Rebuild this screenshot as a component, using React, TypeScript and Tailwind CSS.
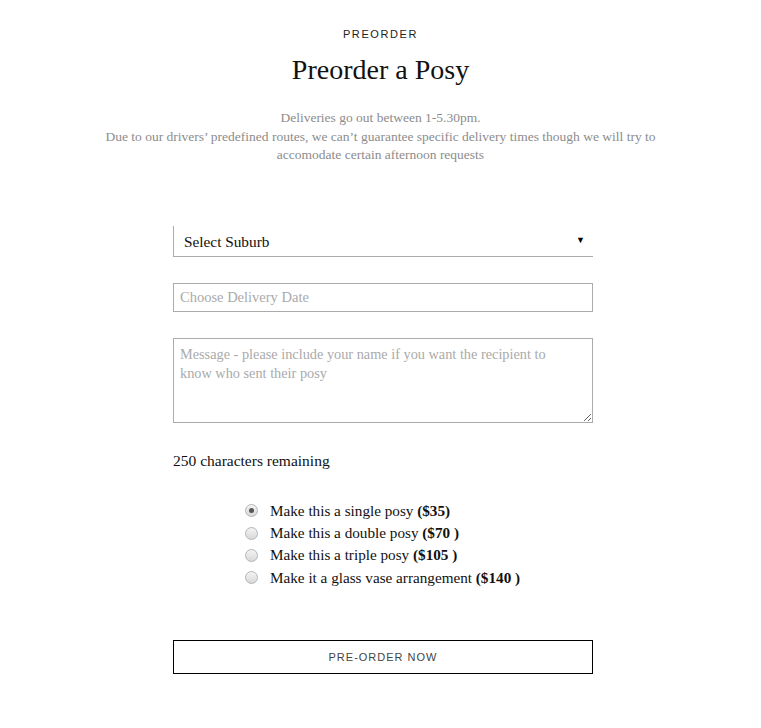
import { useState } from 'react';

const options = [
  { label: 'Make this a single posy', price: '($35)' },
  { label: 'Make this a double posy', price: '($70 )' },
  { label: 'Make this a triple posy', price: '($105 )' },
  { label: 'Make it a glass vase arrangement', price: '($140 )' },
];

export default function App() {
  const [message, setMessage] = useState('');
  const [choice, setChoice] = useState(0);

  return (
    <div className="min-h-screen bg-white flex flex-col items-center font-['Liberation_Serif',serif] text-[#111]">
      <p className="mt-[27px] text-[11px] leading-[14px] tracking-[1.6px] text-[#222] font-['Liberation_Sans',Arial,sans-serif]">
        PREORDER
      </p>
      <h1 className="mt-[12px] text-[28px] leading-[34px]">Preorder a Posy</h1>

      <div className="mt-[22px] text-center text-[13.5px] leading-[18.5px] text-[#8c8c8c]">
        <p>Deliveries go out between 1-5.30pm.</p>
        <p>
          Due to our drivers’ predefined routes, we can’t guarantee specific delivery times though we will try to
          <br />
          accomodate certain afternoon requests
        </p>
      </div>

      <form className="mt-[61px] ml-[5px] w-[420px] flex flex-col" onSubmit={(e) => e.preventDefault()}>
        <div className="h-[31px] border-l border-b border-[#ababab] flex items-center justify-between pl-[10px] pr-[8px]">
          <span className="text-[15.3px] leading-[20px] pt-[2px]">Select Suburb</span>
          <span className="text-[9px] text-black">▼</span>
        </div>

        <input
          type="text"
          placeholder="Choose Delivery Date"
          className="mt-[26px] h-[29px] border border-[#ababab] px-[6px] text-[14.5px] placeholder:text-[#aaa] outline-none"
        />

        <textarea
          value={message}
          maxLength={250}
          onChange={(e) => setMessage(e.target.value)}
          placeholder="Message - please include your name if you want the recipient to know who sent their posy"
          className="mt-[26px] h-[85px] border border-[#ababab] pl-[6px] pr-[30px] py-[6px] text-[14.3px] leading-[19px] placeholder:text-[#aaa] outline-none"
        />

        <p className="mt-[28px] text-[15.5px] leading-[20px]">{250 - message.length} characters remaining</p>

        <div className="mt-[31px] ml-[72px] flex flex-col gap-[4px]">
          {options.map((o, i) => (
            <label key={o.label} className="flex items-center gap-[12px] text-[15.2px] leading-[18.4px] cursor-pointer">
              <span
                onClick={() => setChoice(i)}
                className="w-[13px] h-[13px] rounded-full border border-[#b5b5b5] bg-gradient-to-b from-[#f4f4f4] to-[#d8d8d8] flex items-center justify-center"
              >
                {choice === i && <span className="w-[5px] h-[5px] rounded-full bg-[#555]" />}
              </span>
              <span>
                {o.label} <b className="font-bold">{o.price}</b>
              </span>
            </label>
          ))}
        </div>

        <button
          type="submit"
          className="mt-[53px] h-[34px] border-[1.5px] border-black text-[11px] tracking-[1px] text-[#444] font-['Liberation_Sans',Arial,sans-serif]"
        >
          PRE-ORDER NOW
        </button>
      </form>
    </div>
  );
}
